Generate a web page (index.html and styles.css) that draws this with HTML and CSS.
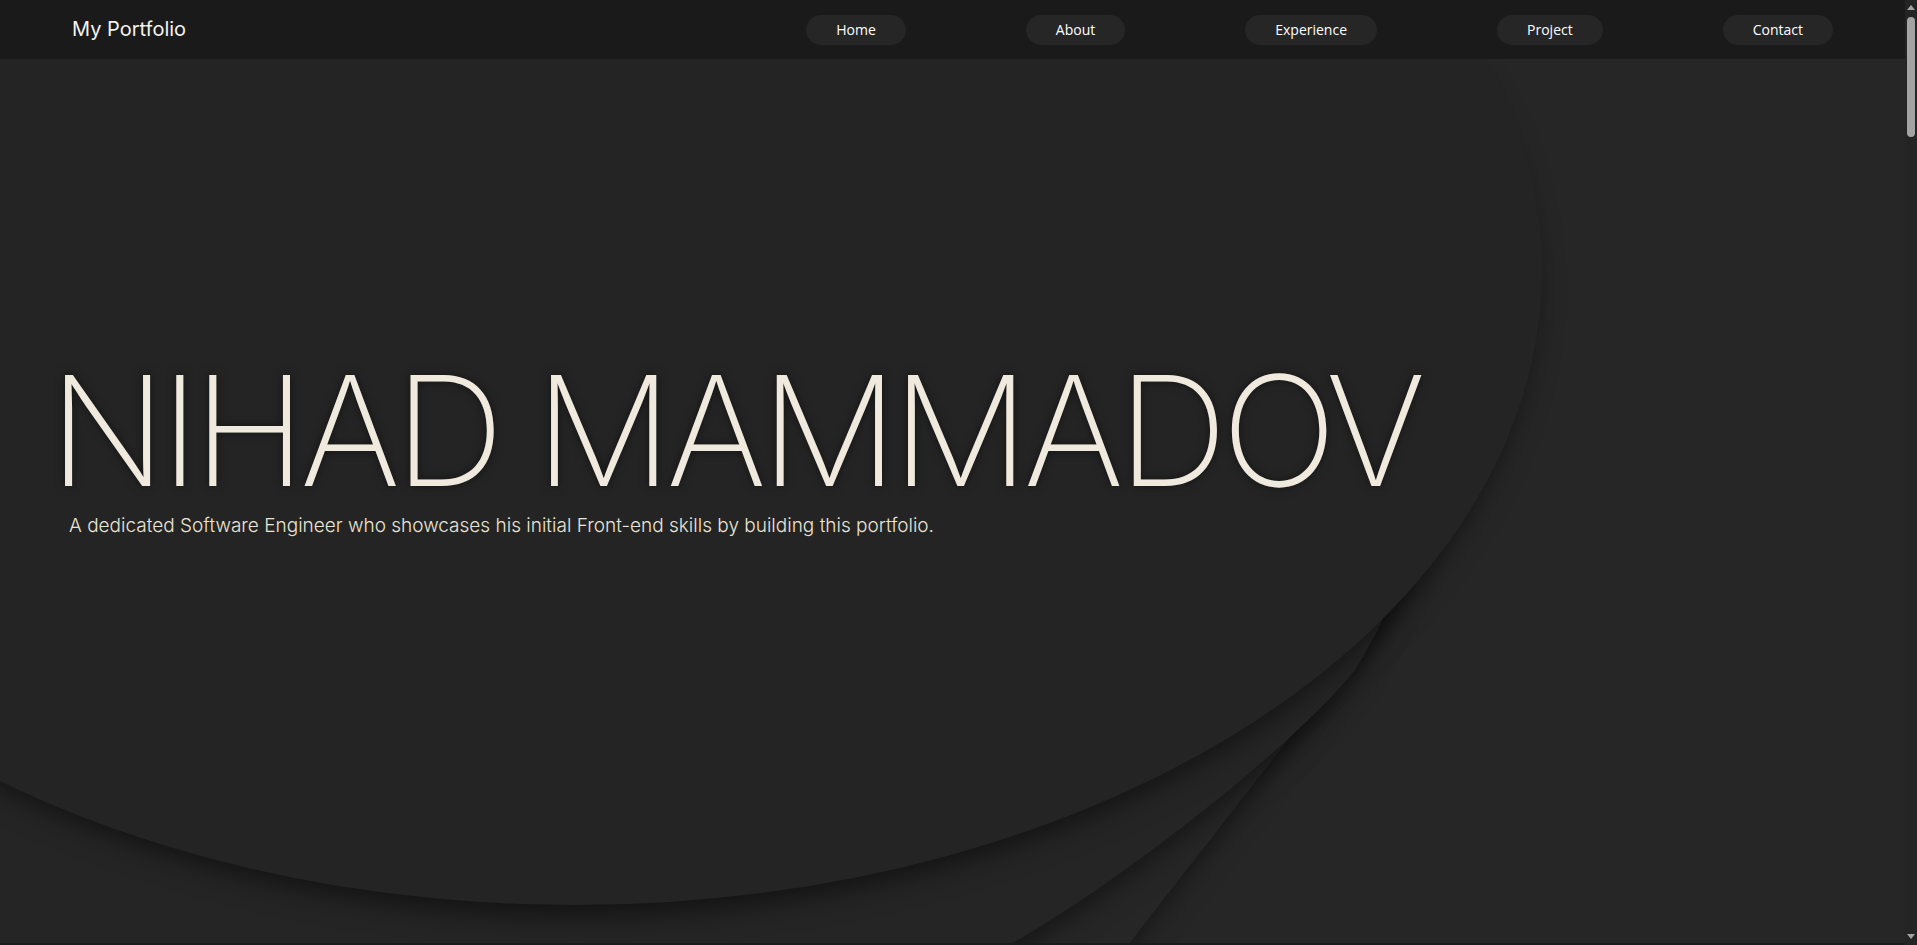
FILE: index.html
```html
<!DOCTYPE html>
<html lang="en">
<head>
<meta charset="utf-8">
<title>My Portfolio</title>
<link rel="stylesheet" href="styles.css">
</head>
<body>
<div class="page">
<header class="site-header">
  <a class="logo" href="#home">My Portfolio</a>
  <nav class="main-nav">
    <ul class="nav-list">
      <li><a class="nav-pill" href="#home">Home</a></li>
      <li><a class="nav-pill" href="#about">About</a></li>
      <li><a class="nav-pill" href="#experience">Experience</a></li>
      <li><a class="nav-pill" href="#project">Project</a></li>
      <li><a class="nav-pill" href="#contact">Contact</a></li>
    </ul>
  </nav>
</header>
<main>
  <section class="hero" id="home">
    <svg class="hero-bg" viewBox="0 59 1905 884" preserveAspectRatio="none" aria-hidden="true">
      <defs>
        <filter id="soft-shadow" filterUnits="userSpaceOnUse" x="-300" y="-300" width="2600" height="1600" color-interpolation-filters="sRGB">
          <feMorphology in="SourceAlpha" operator="erode" radius="9" result="shrunk"/>
          <feGaussianBlur in="shrunk" stdDeviation="14" result="blur"/>
          <feOffset in="blur" dx="2" dy="20" result="moved"/>
          <feFlood flood-color="#000" flood-opacity="0.5"/>
          <feComposite operator="in" in2="moved" result="shadow"/>
          <feMerge>
            <feMergeNode in="shadow"/>
            <feMergeNode in="SourceGraphic"/>
          </feMerge>
        </filter>
      </defs>
      <path class="shape shape-back" filter="url(#soft-shadow)" d="M -50 -100 L 1300 -100 C 1450 100 1510 420 1385 615 C 1320 700 1190 865 1130 943 C 1105 975 1080 1010 1060 1050 L -50 1050 Z"/>
      <path class="shape shape-mid" filter="url(#soft-shadow)" d="M -50 -100 L 1280 -100 C 1440 100 1500 440 1355 670 C 1290 750 1123 880 1013 943 C 960 973 900 1000 850 1030 L -50 1050 Z"/>
      <ellipse class="shape shape-front" filter="url(#soft-shadow)" cx="574" cy="270" rx="968" ry="635"/>
    </svg>
    <div class="hero-content">
      <h1 class="hero-title">NIHAD MAMMADOV</h1>
      <p class="hero-subtitle">A dedicated Software Engineer who showcases his initial Front-end skills by building this portfolio.</p>
    </div>
  </section>
</main>
</div>
<div class="scroll-rail" aria-hidden="true">
  <span class="scroll-arrow scroll-arrow-up"></span>
  <span class="scroll-thumb"></span>
  <span class="scroll-arrow scroll-arrow-down"></span>
</div>
</body>
</html>
```
FILE: styles.css
```css
html {
  background: #242424;
}

body {
  margin: 0;
  padding: 0;
  font-family: "Inter", "Open Sans", sans-serif;
}

.page {
  margin-right: 12px;
  background: #262626;
}

.site-header {
  position: relative;
  z-index: 2;
  display: flex;
  align-items: center;
  justify-content: space-between;
  height: 59px;
  padding: 0 72px;
  background: #1a1a1a;
}

.logo {
  font-family: "Inter", sans-serif;
  font-weight: 400;
  font-size: 20px;
  line-height: 1;
  color: #f4f2ee;
  text-decoration: none;
  margin-top: -1px;
}

.nav-list {
  display: flex;
  gap: 120px;
  margin: 0;
  padding: 0;
  list-style: none;
}

.nav-pill {
  display: block;
  height: 30px;
  padding: 0 30px;
  border-radius: 15px;
  background: #262626;
  color: #ffffff;
  font-family: "Open Sans", sans-serif;
  font-size: 14px;
  line-height: 30px;
  text-decoration: none;
}

.hero {
  position: relative;
  height: 884px;
  overflow: hidden;
  border-bottom: 2px solid #1b1b1b;
}

.hero-bg {
  position: absolute;
  top: 0;
  left: 0;
  width: 100%;
  height: 100%;
}

.shape-back { fill: #262626; }
.shape-mid { fill: #252525; }
.shape-front { fill: #242424; }

.hero-content {
  position: relative;
  z-index: 1;
  padding: 295px 0 0 49px;
}

.hero-title {
  margin: 0;
  font-family: "Inter", sans-serif;
  font-weight: 200;
  font-size: 153px;
  line-height: 1;
  letter-spacing: -6px;
  color: #efe9de;
  text-shadow: 0 0 10px rgba(0, 0, 0, 0.5);
}

.hero-subtitle {
  margin: 9px 0 0 20px;
  font-family: "Inter", sans-serif;
  font-weight: 300;
  font-size: 19px;
  line-height: 1;
  color: #ebe4d6;
}

/* decorative scroll indicator fixed over the right edge */
.scroll-rail {
  position: fixed;
  top: 0;
  right: 0;
  bottom: 0;
  width: 12px;
  display: flex;
  flex-direction: column;
  align-items: center;
  background: #242424;
  z-index: 5;
}

.scroll-arrow {
  display: block;
  width: 0;
  height: 0;
  border-left: 4px solid transparent;
  border-right: 4px solid transparent;
}

.scroll-arrow-up {
  margin-top: 5px;
  border-bottom: 5px solid #a3a3a3;
}

.scroll-thumb {
  display: block;
  width: 8px;
  height: 120px;
  margin-top: 7px;
  border-radius: 4px;
  background: #a3a3a3;
}

.scroll-arrow-down {
  margin-top: auto;
  margin-bottom: 6px;
  border-top: 5px solid #a3a3a3;
}
```
